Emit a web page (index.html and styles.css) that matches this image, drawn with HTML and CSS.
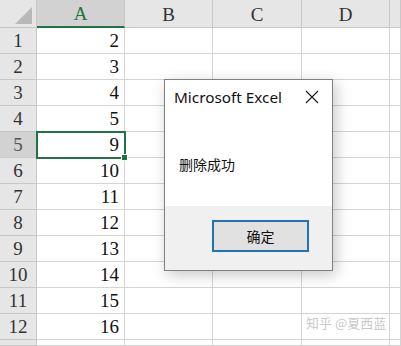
FILE: index.html
```html
<!DOCTYPE html>
<html lang="zh">
<head>
  <meta charset="UTF-8">
  <title>Microsoft Excel</title>
  <meta name="viewport" content="width=device-width, initial-scale=1">
  <link rel="stylesheet" href="styles.css">
</head>
<body>
  <!-- WERKBLAD -->
  <div class="sheet">
    <div class="hd corner"><span class="tri"></span></div>
    <div class="hd col sel">A</div>
    <div class="hd col">B</div>
    <div class="hd col">C</div>
    <div class="hd col">D</div>
    <div class="hd col"></div>

    <div class="hd row">1</div><div class="cell num">2</div><div class="cell"></div><div class="cell"></div><div class="cell"></div><div class="cell"></div>
    <div class="hd row">2</div><div class="cell num">3</div><div class="cell"></div><div class="cell"></div><div class="cell"></div><div class="cell"></div>
    <div class="hd row">3</div><div class="cell num">4</div><div class="cell"></div><div class="cell"></div><div class="cell"></div><div class="cell"></div>
    <div class="hd row">4</div><div class="cell num">5</div><div class="cell"></div><div class="cell"></div><div class="cell"></div><div class="cell"></div>
    <div class="hd row sel">5</div><div class="cell num active">9</div><div class="cell"></div><div class="cell"></div><div class="cell"></div><div class="cell"></div>
    <div class="hd row">6</div><div class="cell num">10</div><div class="cell"></div><div class="cell"></div><div class="cell"></div><div class="cell"></div>
    <div class="hd row">7</div><div class="cell num">11</div><div class="cell"></div><div class="cell"></div><div class="cell"></div><div class="cell"></div>
    <div class="hd row">8</div><div class="cell num">12</div><div class="cell"></div><div class="cell"></div><div class="cell"></div><div class="cell"></div>
    <div class="hd row">9</div><div class="cell num">13</div><div class="cell"></div><div class="cell"></div><div class="cell"></div><div class="cell"></div>
    <div class="hd row">10</div><div class="cell num">14</div><div class="cell"></div><div class="cell"></div><div class="cell"></div><div class="cell"></div>
    <div class="hd row">11</div><div class="cell num">15</div><div class="cell"></div><div class="cell"></div><div class="cell"></div><div class="cell"></div>
    <div class="hd row">12</div><div class="cell num">16</div><div class="cell"></div><div class="cell"></div><div class="cell"></div><div class="cell"></div>
    <div class="hd row"></div><div class="cell num"></div><div class="cell"></div><div class="cell"></div><div class="cell"></div><div class="cell"></div>
  </div>

  <!-- MELDING -->
  <div class="dialog">
    <div class="dialog-title">
      <span>Microsoft Excel</span>
      <svg class="close" width="14" height="14" viewBox="0 0 14 14">
        <path d="M1 1 L13 13 M13 1 L1 13" stroke="#1a1a1a" stroke-width="1.1" fill="none"/>
      </svg>
    </div>
    <div class="dialog-body">删除成功</div>
    <div class="dialog-foot">
      <button class="ok">确定</button>
    </div>
  </div>

  <div class="watermark">知乎 @夏西蓝</div>
</body>
</html>
```

FILE: styles.css
```css
body {
  margin: 0;
  width: 401px;
  height: 346px;
  overflow: hidden;
  background: #fff;
  font-family: 'Liberation Serif', 'Noto Sans CJK SC', serif;
  position: relative;
}
.sheet {
  display: grid;
  grid-template-columns: 37px 88px 88px 89px 88px 1fr;
  grid-template-rows: 28px repeat(12, 26px) 6px;
}
.hd {
  background: #e6e6e6;
  color: #333;
  border-right: 1px solid #c8c8c8;
  border-bottom: 1px solid #c8c8c8;
  box-sizing: border-box;
  display: flex;
  align-items: center;
  justify-content: center;
  font-size: 19px;
}
.hd.col { padding-top: 2px; }
.hd.sel {
  background: #d2d2d2;
  color: #217346;
}
.hd.row.sel { color: #555; }
.hd.col.sel {
  border-bottom: 2px solid #217346;
}
.corner { position: relative; }
.corner .tri {
  position: absolute;
  right: 4px;
  bottom: 3px;
  width: 17px;
  height: 17px;
  background: #b8b8b8;
  clip-path: polygon(100% 0, 100% 100%, 0 100%);
}
.cell {
  border-right: 1px solid #d4d4d4;
  border-bottom: 1px solid #d4d4d4;
  box-sizing: border-box;
  font-size: 19px;
  color: #111;
  display: flex;
  align-items: center;
  justify-content: flex-end;
  padding: 1px 5px 0 0;
}
.cell.active {
  position: relative;
  outline: 2px solid #217346;
  outline-offset: -1px;
}
.cell.active::after {
  content: "";
  position: absolute;
  right: -4px;
  bottom: -4px;
  width: 5px;
  height: 5px;
  background: #217346;
  border: 1px solid #fff;
}
.dialog {
  position: absolute;
  left: 164px;
  top: 79px;
  width: 169px;
  height: 192px;
  box-sizing: border-box;
  border: 1px solid #808080;
  background: #fff;
  box-shadow: 3px 4px 14px rgba(0,0,0,0.22);
  display: flex;
  flex-direction: column;
  font-family: 'Noto Sans', 'Noto Sans CJK SC', sans-serif;
  color: #111;
}
.dialog-title {
  display: flex;
  justify-content: space-between;
  align-items: center;
  height: 38px;
  padding: 0 13px 5px 9px;
  box-sizing: border-box;
  font-size: 15.3px;
}
.dialog-title .close { margin-top: 1px; }
.dialog-body {
  flex: 1;
  padding: 36px 0 0 14px;
  font-size: 14px;
  font-family: 'Noto Sans CJK SC', sans-serif;
}
.dialog-foot {
  height: 64px;
  background: #f0f0f0;
  display: flex;
  align-items: flex-start;
  padding: 14px 0 0 47px;
  box-sizing: border-box;
}
.ok {
  width: 97px;
  height: 32px;
  background: #e1e1e1;
  border: 2px solid #2472b5;
  font-family: 'Noto Sans CJK SC', sans-serif;
  font-size: 14px;
  color: #111;
  padding: 0;
}
.watermark {
  position: absolute;
  left: 306px;
  top: 313px;
  font-family: 'Noto Sans CJK SC', sans-serif;
  font-size: 13px;
  color: rgba(150,150,150,0.55);
}
```
